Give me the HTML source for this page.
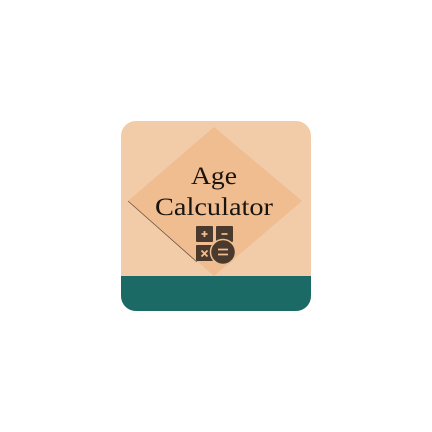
<!DOCTYPE html>
<html><head><style>html,body{margin:0;background:#fff;width:432px;height:432px;overflow:hidden}</style></head>
<body>
<svg width="432" height="432" viewBox="0 0 432 432">
<defs><clipPath id="c"><rect x="121" y="121" width="190" height="190" rx="15"/></clipPath></defs>
<g clip-path="url(#c)">
<rect x="121" y="121" width="190" height="190" fill="#f2cca8"/>
<polygon points="214,127 302,201 214,276 128,201" fill="#efbd8f"/>
<line x1="128" y1="201" x2="197" y2="262" stroke="#6b5040" stroke-width="0.8"/>
<rect x="121" y="276" width="190" height="40" fill="#1b6a66"/>
</g>
<g font-family="Liberation Serif, serif" font-size="25" fill="#1a1410" text-anchor="middle">
<text x="214" y="184" textLength="46" lengthAdjust="spacingAndGlyphs">Age</text>
<text x="214" y="215" textLength="118" lengthAdjust="spacingAndGlyphs">Calculator</text>
</g>
<g fill="#4a3a2e">
<rect x="196" y="226" width="17" height="16" rx="1"/>
<rect x="216" y="226" width="17" height="16" rx="1"/>
<rect x="196" y="245" width="17" height="16" rx="1"/>
<circle cx="223" cy="252" r="12.5" stroke="#efbd8f" stroke-width="1.5"/>
</g>
<g stroke="#efbd8f" stroke-width="1.8" fill="none">
<path d="M201.5 234h6M204.5 231v6M221.5 234h6M201.5 250.5l6 6M207.5 250.5l-6 6M218 249.5h10M218 254.5h10"/>
</g>
</svg>
</body></html>
